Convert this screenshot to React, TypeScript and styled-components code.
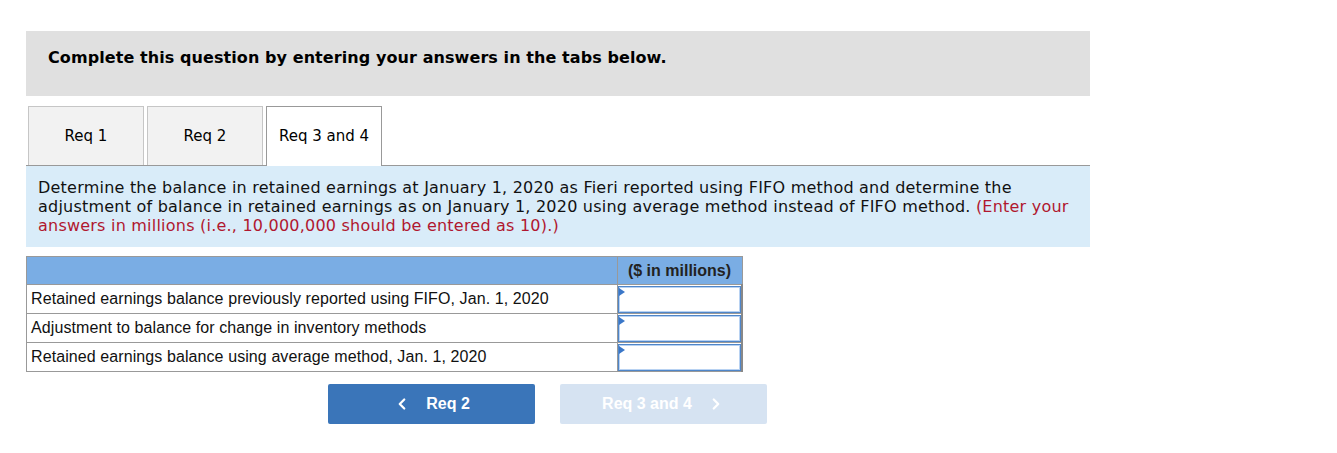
import React from 'react';
import styled, { createGlobalStyle } from 'styled-components';
import { ChevronLeft, ChevronRight } from 'lucide-react';

const GlobalStyle = createGlobalStyle`
  * {
    box-sizing: border-box;
  }
  body {
    margin: 0;
    background: #fff;
    font-family: "DejaVu Sans", Verdana, sans-serif;
    color: #000;
  }
`;

const Page = styled.div`
  width: 1337px;
  height: 453px;
  overflow: hidden;
  padding: 31px 0 0 26px;
`;

const Column = styled.div`
  width: 1064px;
`;

const Banner = styled.div`
  background: #e0e0e0;
  height: 65px;
  display: flex;
  align-items: center;
  padding: 0 22px 12px;
  font-weight: bold;
  font-size: 16px;
  letter-spacing: 0.08px;
`;

const TabBar = styled.div`
  display: flex;
  gap: 3px;
  margin-top: 10px;
  padding-left: 2px;
  border-bottom: 1px solid #999;
  height: 60px;
`;

const Tab = styled.div<{ $active?: boolean }>`
  width: 116px;
  height: ${(p) => (p.$active ? '60px' : '59px')};
  display: flex;
  align-items: center;
  justify-content: center;
  font-size: 15px;
  padding-bottom: 1px;
  background: ${(p) => (p.$active ? '#fff' : '#f2f2f2')};
  border: 1px solid ${(p) => (p.$active ? '#999' : '#c6c6c6')};
  border-bottom: none;
  position: relative;
  z-index: 1;
`;

const Instructions = styled.div`
  background: #d9ecf9;
  padding: 12px;
  font-size: 16px;
  letter-spacing: 0.22px;
  line-height: 19px;
  color: #111;
  white-space: nowrap;
`;

const Hint = styled.span`
  color: #b0172f;
`;

const Table = styled.table`
  margin-top: 9px;
  width: 717px;
  border-collapse: collapse;
  font-family: "Liberation Sans", Arial, sans-serif;
  font-size: 16px;
`;

const HeadCell = styled.th`
  background: #7aade4;
  border: 1px solid #999;
  height: 28px;
  padding: 0;
  font-weight: bold;
  color: #222;
  text-align: center;
`;

const LabelCell = styled.td`
  border: 1px solid #999;
  height: 29px;
  padding: 0 4px;
  color: #111;
  letter-spacing: 0.09px;
`;

const InputCell = styled.td`
  border: 1px solid #999;
  border-right: 2px solid #888;
  width: 125px;
  padding: 0;
  height: 29px;
`;

const AnswerBox = styled.div`
  position: relative;
  height: 27px;
  background: #fff;
  border: 1px solid #4f86c9;
  box-shadow: inset 0 0 0 1px #b8d2f2;
`;

const Marker = styled.span`
  position: absolute;
  left: 0;
  top: 1px;
  width: 0;
  height: 0;
  border-top: 4px solid transparent;
  border-bottom: 4px solid transparent;
  border-left: 6px solid #3a77c8;
`;

const NavRow = styled.div`
  display: flex;
  gap: 25px;
  margin: 12px 0 0 302px;
`;

const NavButton = styled.button<{ $disabled?: boolean }>`
  width: 207px;
  height: 40px;
  border: none;
  border-radius: 2px;
  background: ${(p) => (p.$disabled ? '#d6e3f2' : '#3a75b9')};
  color: #fff;
  font-family: "Liberation Sans", Arial, sans-serif;
  font-weight: bold;
  font-size: 16px;
  display: flex;
  align-items: center;
  justify-content: center;
  gap: 15px;
  padding: 0;
  cursor: ${(p) => (p.$disabled ? 'default' : 'pointer')};
`;

const rows = [
  'Retained earnings balance previously reported using FIFO, Jan. 1, 2020',
  'Adjustment to balance for change in inventory methods',
  'Retained earnings balance using average method, Jan. 1, 2020',
];

export default function App() {
  return (
    <>
      <GlobalStyle />
      <Page>
        <Column>
          <Banner>Complete this question by entering your answers in the tabs below.</Banner>
          <TabBar>
            <Tab>Req 1</Tab>
            <Tab>Req 2</Tab>
            <Tab $active>Req 3 and 4</Tab>
          </TabBar>
          <Instructions>
            Determine the balance in retained earnings at January 1, 2020 as Fieri reported using FIFO
            method and determine the
            <br />
            adjustment of balance in retained earnings as on January 1, 2020 using average method
            instead of FIFO method. <Hint>(Enter your</Hint>
            <br />
            <Hint>answers in millions (i.e., 10,000,000 should be entered as 10).)</Hint>
          </Instructions>
          <Table>
            <thead>
              <tr>
                <HeadCell />
                <HeadCell>($ in millions)</HeadCell>
              </tr>
            </thead>
            <tbody>
              {rows.map((r) => (
                <tr key={r}>
                  <LabelCell>{r}</LabelCell>
                  <InputCell>
                    <AnswerBox>
                      <Marker />
                    </AnswerBox>
                  </InputCell>
                </tr>
              ))}
            </tbody>
          </Table>
          <NavRow>
            <NavButton>
              <ChevronLeft size={18} strokeWidth={3} />
              Req 2
            </NavButton>
            <NavButton $disabled>
              Req 3 and 4
              <ChevronRight size={18} strokeWidth={3} />
            </NavButton>
          </NavRow>
        </Column>
      </Page>
    </>
  );
}
